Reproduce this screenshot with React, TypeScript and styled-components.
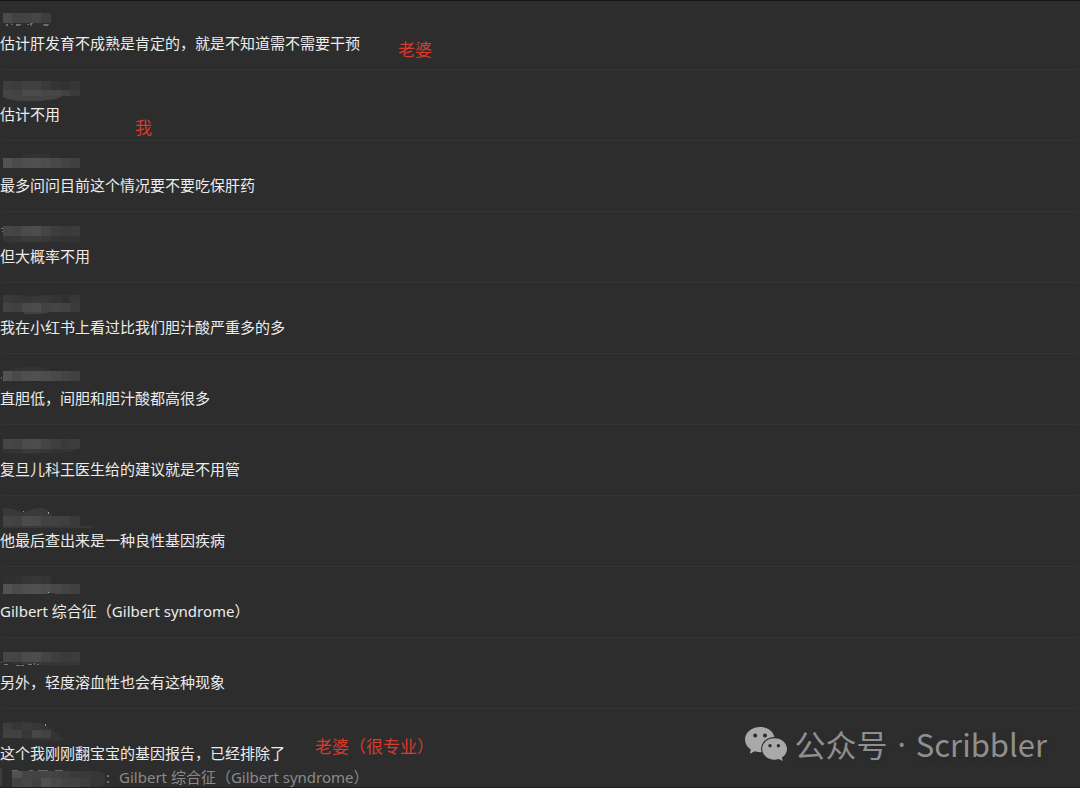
import React from "react";
import styled, { createGlobalStyle } from "styled-components";

const GlobalStyle = createGlobalStyle`
  * { box-sizing: border-box; }
  body {
    margin: 0;
    background: #2d2d2d;
    font-family: "Noto Sans", "Noto Sans CJK SC", sans-serif;
  }
`;

const Page = styled.main`
  position: relative;
  min-height: 100vh;
  overflow: hidden;
  background: #2d2d2d;
  border-top: 1px solid #161616;
  border-bottom: 1px solid #1f1f23;
`;

const MessageList = styled.ol`
  list-style: none;
  margin: 0;
  padding: 0;
`;

const MessageRow = styled.li`
  position: relative;
`;

const MessageText = styled.p`
  margin: 0;
  font-size: 15px;
  line-height: 24px;
  color: #ececec;
  white-space: nowrap;
`;

const Divider = styled.div`
  height: 1px;
  margin: 14px 2px 0;
  background: #353535;
`;

const Note = styled.span<{ $left: number; $top: number }>`
  position: absolute;
  left: ${(p) => p.$left}px;
  top: ${(p) => p.$top}px;
  font-size: 17px;
  line-height: 24px;
  color: #d93a2b;
  white-space: nowrap;
`;

const MaskSvg = styled.svg`
  display: block;
`;

const Quote = styled.blockquote`
  display: flex;
  align-items: center;
  gap: 1px;
  height: 21px;
  margin: 1px 0 0;
  font-size: 15px;
  line-height: 22px;
  color: #8a8a8a;
  white-space: nowrap;
`;

const QuoteBar = styled.span`
  width: 2px;
  height: 18px;
  background: #3d3d3d;
`;

const QuoteText = styled.span`
  padding-left: 8px;
`;

const Watermark = styled.div`
  position: absolute;
  right: 33px;
  bottom: 23px;
  display: flex;
  align-items: center;
  gap: 8px;
  font-family: "Noto Sans CJK SC", sans-serif;
  font-size: 31px;
  line-height: 40px;
  color: #8f8f8f;
  text-shadow: 0 2px 8px rgba(0, 0, 0, 0.15);
  white-space: nowrap;
`;

const WatermarkText = styled.span`
  display: flex;
  gap: 10px;
`;

const Dot = styled.span`
  font-family: "Noto Sans", sans-serif;
`;

type Band = { y: number; h: number; from?: number; shades: string[] };
type Blob = { d: string; fill: string };
type Mask = { bands: Band[]; under?: Blob[]; specks?: Blob[] };

const TILE = 29 / 3;

function MaskShapes({ mask, x = 2.67 }: { mask: Mask; x?: number }) {
  const edge = (i: number) => Math.round(x + i * TILE);
  return (
    <>
      {mask.under?.map((b) => <path key={b.d} d={b.d} fill={b.fill} />)}
      {mask.bands.map((band) =>
        band.shades.map((shade, i) => {
          const col = i + (band.from ?? 0);
          return (
            <rect
              key={`${band.y}-${i}`}
              x={edge(col)}
              y={band.y}
              width={edge(col + 1) - edge(col)}
              height={band.h}
              fill={shade}
            />
          );
        })
      )}
      {mask.specks?.map((b) => <path key={b.d} d={b.d} fill={b.fill} />)}
    </>
  );
}

function NameMask({ mask, clipTop = 0 }: { mask: Mask; clipTop?: number }) {
  const height = 32 - clipTop;
  return (
    <MaskSvg width="100" height={height} viewBox={`0 ${clipTop} 100 ${height}`} aria-hidden="true">
      <MaskShapes mask={mask} />
    </MaskSvg>
  );
}

const BRIGHT = ["#525252", "#4a4a4a", "#4f4f4f", "#505050", "#4d4d4d", "#494949", "#434343", "#404040"];
const SOFT = ["#464646", "#444444", "#4b4b4b", "#4d4d4d", "#444444", "#3e3e3e", "#3a3a3a", "#3c3c3c"];

type Message = { text: string; mask: Mask; note?: { text: string; left: number; top: number } };

const messages: Message[] = [
  {
    text: "估计肝发育不成熟是肯定的，就是不知道需不需要干预",
    note: { text: "老婆", left: 398, top: 37 },
    mask: {
      bands: [{ y: 14, h: 10, shades: ["#4b4b4b", "#424242", "#434343", "#474747", "#3e3e3e"] }],
      specks: [
        { d: "M6 25h2v2H6zM11 24l2 2h-2zM16 25h5v1l-2 1h-3zM27 25h2v1h-2zM30 24h3l-2 3h-1zM43 25h6l-1 2h-4z", fill: "#6f6f6f" },
      ],
    },
  },
  {
    text: "估计不用",
    note: { text: "我", left: 135, top: 46 },
    mask: {
      under: [{ d: "M3 26H63Q57 30 46 30Q40 32 33 31Q12 32 3 27Z", fill: "#434343" }],
      bands: [
        { y: 11, h: 9, shades: ["#3e3e3e", "#3c3c3c", "#414141", "#404040", "#3a3a3a", "#343434", "#313131", "#363636"] },
        { y: 20, h: 6, shades: ["#454545", "#424242", "#4a4a4a", "#4b4b4b", "#474747", "#474747", "#424242", "#3b3b3b"] },
      ],
    },
  },
  {
    text: "最多问问目前这个情况要不要吃保肝药",
    mask: {
      bands: [
        { y: 13, h: 4, from: 2, shades: ["#313131", "#333333", "#313131"] },
        { y: 17, h: 10, shades: BRIGHT },
      ],
    },
  },
  {
    text: "但大概率不用",
    mask: {
      under: [{ d: "M3 23H80V30H20Q5 32 3 27Z", fill: "#363636" }],
      bands: [
        { y: 14, h: 10, shades: SOFT },
        { y: 24, h: 6, from: 1, shades: ["#373737", "#3b3b3b", "#3b3b3b", "#383838", "#343434", "#323232", "#333333"] },
      ],
      specks: [{ d: "M1 16h2v1H1zM2 19h1v1H2z", fill: "#777777" }],
    },
  },
  {
    text: "我在小红书上看过比我们胆汁酸严重多的多",
    mask: {
      under: [{ d: "M22 28H54Q42 32 25 31Z", fill: "#424242" }],
      bands: [
        { y: 12, h: 8, shades: ["#3a3a3a", "#373737", "#363636", "#393939", "#373737", "#343434", "#303030", "#373737"] },
        { y: 20, h: 9, shades: ["#434343", "#404040", "#4a4a4a", "#4c4c4c", "#424242", "#444444", "#424242", "#3b3b3b"] },
      ],
      specks: [{ d: "M22 12H42Q32 15 22 12Z", fill: "#2d2d2d" }],
    },
  },
  {
    text: "直胆低，间胆和胆汁酸都高很多",
    mask: {
      under: [{ d: "M3 17Q22 12 42 13L51 17Z", fill: "#333333" }],
      bands: [{ y: 17, h: 10, shades: BRIGHT }],
      specks: [{ d: "M1 23h1v2H1zM3 26h2v1H3z", fill: "#666666" }],
    },
  },
  {
    text: "复旦儿科王医生给的建议就是不用管",
    mask: {
      under: [{ d: "M3 23H80L70 27Q40 30 3 28Z", fill: "#343434" }],
      bands: [
        { y: 14, h: 10, shades: SOFT },
        { y: 24, h: 4, from: 2, shades: ["#3a3a3a", "#393939", "#363636", "#333333"] },
      ],
    },
  },
  {
    text: "他最后查出来是一种良性基因疾病",
    mask: {
      under: [
        { d: "M3 12Q14 12 23 17Q38 9 48 14L52 20H3Z", fill: "#393939" },
        { d: "M3 29H72L80 30H96Q91 33 76 33H3Z", fill: "#383838" },
        { d: "M52 20L80 19V21H52Z", fill: "#323232" },
      ],
      bands: [{ y: 20, h: 10, shades: ["#444444", "#424242", "#4b4b4b", "#494949", "#424242", "#414141", "#3f3f3f", "#393939"] }],
      specks: [{ d: "M23 15h1v1h-1zM48 16h1v2h-1z", fill: "#999999" }],
    },
  },
  {
    text: "Gilbert 综合征（Gilbert syndrome）",
    mask: {
      bands: [
        { y: 9, h: 8, shades: ["#2f2f2f", "#303030", "#353535", "#373737", "#343434"] },
        { y: 17, h: 10, shades: BRIGHT },
      ],
      specks: [
        { d: "M46 27Q51 25 57 27Z", fill: "#2d2d2d" },
        { d: "M48 25h1v1h-1z", fill: "#aaaaaa" },
      ],
    },
  },
  {
    text: "另外，轻度溶血性也会有这种现象",
    mask: {
      under: [{ d: "M40 23H80V27Q60 29 40 27Z", fill: "#363636" }],
      bands: [
        { y: 14, h: 10, shades: SOFT },
        { y: 24, h: 2, from: 1, shades: ["#343434", "#393939", "#393939"] },
      ],
      specks: [{ d: "M1 24h1v1H1zM4 26h4v1H4zM16 27h4v1h-4zM21 27h3v1h-3zM28 26h4v1h-4zM34 25h1v2h-1zM37 26h2v1h-2z", fill: "#777777" }],
    },
  },
  {
    text: "这个我刚刚翻宝宝的基因报告，已经排除了",
    note: { text: "老婆（很专业）", left: 315, top: 26 },
    mask: {
      under: [{ d: "M3 14L20 12Q38 13 51 19L62 29L65 31Q52 33 34 31L3 28Z", fill: "#343434" }],
      bands: [
        { y: 14, h: 7, shades: ["#3d3d3d", "#363636", "#3a3a3a", "#373737"] },
        { y: 21, h: 8, shades: ["#414141", "#414141", "#373737", "#474747", "#424242"] },
      ],
      specks: [{ d: "M45 15h1v2h-1z", fill: "#999999" }],
    },
  },
];

const quoteMask: Mask = {
  under: [{ d: "M12 5H98Q107 6 108 12Q108 19 99 21H12Z", fill: "#363636" }],
  bands: [
    { y: 5, h: 7, shades: ["#515151", "#444444", "#434343", "#454545", "#424242", "#3f3f3f", "#3a3a3a", "#393939"] },
    { y: 12, h: 10, shades: ["#424242", "#464646", "#414141", "#505050", "#484848", "#434343", "#424242", "#3d3d3d"] },
  ],
  specks: [{ d: "M12 5h6v-1h-6zM29 5h4v-1h-4zM38 5h10v-1H38zM55 5h8v-1h-8z", fill: "#666666" }],
};

function WechatLogo() {
  return (
    <svg width="42" height="36" viewBox="0 0 42 36" aria-hidden="true">
      <path
        fill="#a9a9a9"
        d="M15 1C6.5 1 0 6.6 0 13.6C0 17.8 2.2 21.2 5.8 23.6L4.8 27.8L9.8 25.3C12.8 26.2 15.5 26.4 18 26.1L29.6 11.8C28.6 5.6 22.6 1 15 1Z"
      />
      <ellipse cx="29.5" cy="23" rx="13.5" ry="12" fill="#2d2d2d" />
      <path
        fill="#a9a9a9"
        d="M29.5 12.3C22.6 12.3 17.2 17 17.2 23C17.2 29 22.6 33.7 29.5 33.7C31 33.7 32.5 33.5 33.8 33L37.8 35L36.8 31.6C39.9 29.8 42 26.5 42 23C42 17 36.4 12.3 29.5 12.3Z"
      />
      <g fill="#2d2d2d">
        <circle cx="10.2" cy="9.6" r="2" />
        <circle cx="20" cy="9.6" r="2" />
        <circle cx="25" cy="19.7" r="1.7" />
        <circle cx="33.4" cy="19.7" r="1.7" />
      </g>
    </svg>
  );
}

export default function App() {
  return (
    <Page>
      <GlobalStyle />
      <MessageList>
        {messages.map((m, i) => (
          <MessageRow key={m.text}>
            <NameMask mask={m.mask} clipTop={i === 0 ? 2 : 0} />
            <MessageText>{m.text}</MessageText>
            {m.note && (
              <Note $left={m.note.left} $top={m.note.top}>
                {m.note.text}
              </Note>
            )}
            {i < messages.length - 1 && <Divider />}
          </MessageRow>
        ))}
      </MessageList>
      <Quote>
        <QuoteBar />
        <MaskSvg width="102" height="22" viewBox="3 0 102 22" aria-hidden="true">
          <MaskShapes mask={quoteMask} x={12.33} />
        </MaskSvg>
        <span>:</span>
        <QuoteText>Gilbert 综合征（Gilbert syndrome）</QuoteText>
      </Quote>
      <Watermark>
        <WechatLogo />
        <WatermarkText>
          <span>公众号</span>
          <Dot>·</Dot>
          <span>Scribbler</span>
        </WatermarkText>
      </Watermark>
    </Page>
  );
}
